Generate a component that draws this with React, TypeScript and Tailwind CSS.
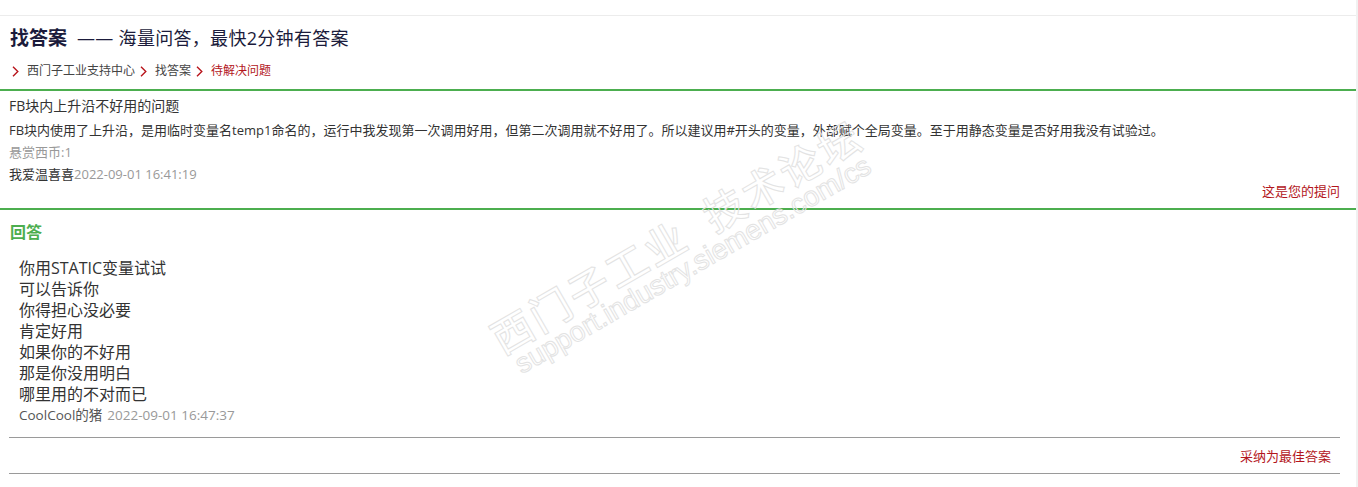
import React from "react";

const FONT = "font-['Open_Sans','Noto_Sans_CJK_SC',sans-serif]";

function Chevron() {
  return (
    <svg width="7" height="11" viewBox="0 0 7 11" className="shrink-0">
      <polyline points="1,0.8 5.8,5.5 1,10.2" fill="none" stroke="#b8141b" strokeWidth="1.4" />
    </svg>
  );
}

const answerLines = [
  "你用STATIC变量试试",
  "可以告诉你",
  "你得担心没必要",
  "肯定好用",
  "如果你的不好用",
  "那是你没用明白",
  "哪里用的不对而已",
];

export default function App() {
  return (
    <div className={`w-[1358px] h-[487px] bg-white relative overflow-hidden flex ${FONT}`}>
      <div className="w-[1356px] flex flex-col">
        <div className="h-[15px]" />
        <div className="h-px bg-[#ececec]" />
        {/* title */}
        <div className="h-[44px] flex items-center pl-[10px] text-[#1b1b3b]">
          <span className="text-[19px] font-bold leading-[24px]">找答案</span>
          <span className="ml-[10px] text-[18px] leading-[24px] tracking-[0.3px]">—— 海量问答，最快2分钟有答案</span>
        </div>
        {/* breadcrumb */}
        <div className="h-[22px] flex items-center pl-[12px] text-[12px] leading-[16px]">
          <Chevron />
          <span className="ml-[8px] text-[#444]">西门子工业支持中心</span>
          <span className="ml-[5px]"><Chevron /></span>
          <span className="ml-[8px] text-[#444]">找答案</span>
          <span className="ml-[5px]"><Chevron /></span>
          <span className="ml-[8px] text-[#b3161c]">待解决问题</span>
        </div>
        <div className="h-[7px]" />
        <div className="h-[2px] bg-[#4cae4f]" />
        {/* question */}
        <div className="pl-[9px] pr-[16px] pt-[3px]">
          <div className="text-[14px] leading-[24px] text-[#333]">FB块内上升沿不好用的问题</div>
          <div className="text-[13px] leading-[24px] text-[#333]">
            FB块内使用了上升沿，是用临时变量名temp1命名的，运行中我发现第一次调用好用，但第二次调用就不好用了。所以建议用#开头的变量，外部赋个全局变量。至于用静态变量是否好用我没有试验过。
          </div>
          <div className="text-[13px] leading-[21px] text-[#999]">悬赏西币:1</div>
          <div className="text-[13px] leading-[22px]">
            <span className="text-[#333]">我爱温喜喜</span>
            <span className="text-[#999]">2022-09-01 16:41:19</span>
          </div>
          <div className="flex justify-end h-[12px] items-center text-[13px] leading-[12px] text-[#b3161c]">
            这是您的提问
          </div>
        </div>
        <div className="h-[11px]" />
        <div className="h-[2px] bg-[#4cae4f]" />
        {/* answers */}
        <div className="pl-[10px] pt-[10px] text-[16px] leading-[24px] font-bold text-[#4cae4f]">回答</div>
        <div className="pl-[19px] mt-[14px] text-[16px] leading-[21px] text-[#333]">
          {answerLines.map((l) => (
            <div key={l}>{l}</div>
          ))}
        </div>
        <div className="pl-[19px] h-[20px] flex items-center text-[13.5px] leading-[20px]">
          <span className="text-[#555]">CoolCool的猪</span>
          <span className="ml-[5px] text-[#999]">2022-09-01 16:47:37</span>
        </div>
        <div className="h-[12px]" />
        <div className="mx-[9px] w-[1331px] h-px bg-[#9a9a9a]" />
        <div className="w-[1340px] h-[35px] flex items-center justify-end pr-[9px] text-[13px] leading-[20px] text-[#b3161c]">
          采纳为最佳答案
        </div>
        <div className="mx-[9px] w-[1331px] h-px bg-[#9a9a9a]" />
      </div>
      <div className="w-[2px] bg-[#f1f1f1]" />
      {/* watermark */}
      <div className="absolute left-[682px] top-[246px] -translate-x-1/2 -translate-y-1/2 -rotate-[30deg] pointer-events-none text-center whitespace-nowrap text-transparent [-webkit-text-stroke:1px_#e3e3e3]">
        <div className="text-[41px] leading-[44px] font-medium font-['Noto_Sans_CJK_SC',sans-serif] tracking-[3px]">西门子工业&nbsp;&nbsp;技术论坛</div>
        <div className="text-[28px] leading-[26px] font-['Liberation_Sans',Arial,sans-serif]">support.industry.siemens.com/cs</div>
      </div>
    </div>
  );
}
